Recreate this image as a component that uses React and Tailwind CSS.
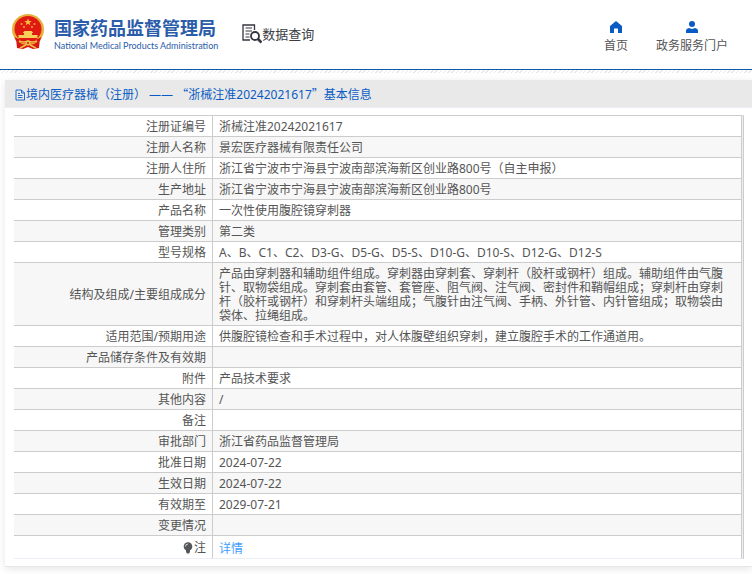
import React from 'react';

const rows = [
  { label: '注册证编号', value: '浙械注准20242021617' },
  { label: '注册人名称', value: '景宏医疗器械有限责任公司' },
  { label: '注册人住所', value: '浙江省宁波市宁海县宁波南部滨海新区创业路800号（自主申报）' },
  { label: '生产地址', value: '浙江省宁波市宁海县宁波南部滨海新区创业路800号' },
  { label: '产品名称', value: '一次性使用腹腔镜穿刺器' },
  { label: '管理类别', value: '第二类' },
  { label: '型号规格', value: 'A、B、C1、C2、D3-G、D5-G、D5-S、D10-G、D10-S、D12-G、D12-S' },
  {
    label: '结构及组成/主要组成成分',
    value:
      '产品由穿刺器和辅助组件组成。穿刺器由穿刺套、穿刺杆（胶杆或钢杆）组成。辅助组件由气腹针、取物袋组成。穿刺套由套管、套管座、阻气阀、注气阀、密封件和鞘帽组成；穿刺杆由穿刺杆（胶杆或钢杆）和穿刺杆头端组成；气腹针由注气阀、手柄、外针管、内针管组成；取物袋由袋体、拉绳组成。',
  },
  { label: '适用范围/预期用途', value: '供腹腔镜检查和手术过程中，对人体腹壁组织穿刺，建立腹腔手术的工作通道用。' },
  { label: '产品储存条件及有效期', value: '' },
  { label: '附件', value: '产品技术要求' },
  { label: '其他内容', value: '/' },
  { label: '备注', value: '' },
  { label: '审批部门', value: '浙江省药品监督管理局' },
  { label: '批准日期', value: '2024-07-22' },
  { label: '生效日期', value: '2024-07-22' },
  { label: '有效期至', value: '2029-07-21' },
  { label: '变更情况', value: '' },
];

const Emblem = () => (
  <svg viewBox="0 0 32 36" className="h-9 w-8 shrink-0" aria-hidden="true">
    <path d="M4 24 L5 34 L11 35 L16 33 L21 35 L27 34 L28 24 Z" fill="#d8150f" />
    <ellipse cx="16" cy="15.500" rx="16" ry="15.500" fill="#e6b03a" />
    <ellipse cx="16" cy="15" rx="13.500" ry="13" fill="#e01a12" />
    <path d="M16 4.500 l1 2.500 h2.700 l-2.200 1.700 .8 2.600 -2.300 -1.600 -2.300 1.600 .8 -2.600 -2.200 -1.700 h2.700 Z" fill="#f5c040" />
    <g fill="#f0a838">
      <circle cx="9.500" cy="10" r="1" />
      <circle cx="12" cy="13" r="1" />
      <circle cx="20" cy="13" r="1" />
      <circle cx="22.500" cy="10" r="1" />
    </g>
    <path d="M11 18.500 L12.500 17 H19.500 L21 18.500 V19 H20 V21 H25.500 V24 H6.500 V21 H12 V19 H11 Z" fill="#f8cf58" />
    <path d="M2.500 23 Q16 31 29.500 23 L28 27 Q16 32 4 27 Z" fill="#d8150f" />
    <path d="M7 27 Q12 29 16 27 Q20 29 25 27" fill="none" stroke="#f0bf4a" strokeWidth="1.400" />
    <circle cx="16" cy="29" r="2.600" fill="#f0bf4a" />
    <circle cx="16" cy="29" r="1" fill="#d8150f" />
    <path d="M8 34 L14 31 M24 34 L18 31" stroke="#f0bf4a" strokeWidth="1.400" />
  </svg>
);

const QueryIcon = () => (
  <svg viewBox="0 0 20 20" className="size-5 shrink-0" fill="none" stroke="#34343f" aria-hidden="true">
    <path d="M12.500 6 V1 H1 V16 H8" strokeWidth="1.300" />
    <path d="M3.500 4 H10 M3.500 7 H10 M3.500 10 H7.500 M3.500 13 H7.500" strokeWidth="1.200" />
    <circle cx="13" cy="12" r="4" strokeWidth="1.800" />
    <path d="M16 15 L19.500 18.500" strokeWidth="2.600" />
  </svg>
);

const HomeIcon = () => (
  <svg viewBox="0 0 12 12" className="size-3" fill="#0a5cc4" aria-hidden="true">
    <path d="M6 0 L12 5 V12 H8 V7.500 H4 V12 H0 V5 Z" />
  </svg>
);

const UserIcon = () => (
  <svg viewBox="0 0 12 12" className="size-3" fill="#0a5cc4" aria-hidden="true">
    <circle cx="6" cy="3" r="3" />
    <path d="M0 12 V10 Q0 7.500 3 7 L6 8 L9 7 Q12 7.500 12 10 V12 Z" />
  </svg>
);

const DocIcon = () => (
  <svg viewBox="0 0 11 12" className="h-3 w-[11px] shrink-0" fill="none" stroke="#0a5cc4" strokeWidth=".9" aria-hidden="true">
    <path d="M1 1 H6.500 L9.500 4 V11 H1 Z M6.500 1 V4 H9.500 M3 4.500 H5 M3 6.500 H7.500 M3 8.500 H7.500" />
  </svg>
);

const BulbIcon = () => (
  <svg viewBox="0 0 10 12" className="h-3 w-2.5" fill="#55565a" aria-hidden="true">
    <circle cx="5" cy="4.500" r="4.300" />
    <path d="M3 8 H7 V10 L6 11.500 H4 L3 10 Z" />
    <path d="M2.500 4.500 Q2.500 2.200 5 2" fill="none" stroke="#fff" strokeWidth=".8" />
  </svg>
);

const labelCell = 'border-r border-b border-[#cccccc] pt-1 pr-1.5 pb-0.5 text-right align-middle font-normal';
const valueCell = 'border-r border-b border-[#cccccc] pt-1 pr-3 pb-0.5 pl-1.5 align-middle';

const App = () => (
  <div className="min-h-screen overflow-x-hidden bg-white pb-2 font-['Noto_Sans','Noto_Sans_CJK_SC',sans-serif] text-xs leading-[14px] text-[#555555]">
    <header className="border-b border-[#0a5caf]">
      <div className="flex h-[69px] items-center justify-between pr-6 pl-3">
        <div className="flex items-center pb-1.5">
          <Emblem />
          <div className="ml-2.5 pt-1.5 text-[#2a5caa]">
            <h1 className="text-lg leading-5 font-bold">国家药品监督管理局</h1>
            <p className="mt-0.5 font-[Lato,sans-serif] text-[9px] leading-3">
              National Medical Products Administration
            </p>
          </div>
          <div className="ml-6 flex items-center pt-1 text-[13px] text-[#3c3c44]">
            <QueryIcon />
            <span>数据查询</span>
          </div>
        </div>
        <nav className="flex gap-7 pt-1">
          <a href="#home" className="flex flex-col items-center gap-1.5">
            <HomeIcon />
            首页
          </a>
          <a href="#portal" className="flex flex-col items-center gap-1.5">
            <UserIcon />
            政务服务门户
          </a>
        </nav>
      </div>
    </header>
    {/* hatched strip under the header */}
    <div className="h-[3px] bg-[repeating-linear-gradient(135deg,#e8e8e8_0_1px,#ffffff_1px_3px)]" />

    <main className="mt-[7px] ml-[5px] border-b border-[#e6e6e6] pb-[7px] shadow-[0_2px_8px_rgba(0,0,0,0.1)]">
      <h2 className="flex h-7 items-center border-b border-[#ebeef5] bg-[#e9e9e9] pt-0.5 pl-2.5 text-[#0a5cc4]">
        <DocIcon />
        <span>
          境内医疗器械（注册） ——{' '}
          <span className="font-['Noto_Sans_CJK_SC',sans-serif]">“</span>
          浙械注准20242021617
          <span className="font-['Noto_Sans_CJK_SC',sans-serif]">”</span>
          基本信息
        </span>
      </h2>
      <div className="mt-[7px] mr-2 ml-[9px] border-r border-[#cccccc] bg-[#ebeef5] pr-px">
        <table className="w-full table-fixed border-separate border-spacing-0 border-t border-[#cccccc] bg-white">
          <colgroup>
            <col className="w-[199px]" />
            <col />
          </colgroup>
          <tbody>
            {rows.map(({ label, value }) => (
              <tr key={label} className="h-[21px] even:bg-[#f7f7f7]">
                <th scope="row" className={labelCell}>{label}</th>
                <td className={valueCell}>{value}</td>
              </tr>
            ))}
            <tr className="h-[23px]">
              <th scope="row" className="border-r border-b border-r-[#cccccc] border-b-[#ebeef5] pt-0.5 pr-1.5 text-right font-normal">
                <span className="flex items-center justify-end gap-px">
                  <BulbIcon />注
                </span>
              </th>
              <td className="border-r border-b border-r-[#cccccc] border-b-[#ebeef5] pt-1 pl-1.5">
                <a href="#detail" className="text-[#409eff]">详情</a>
              </td>
            </tr>
          </tbody>
        </table>
      </div>
    </main>
  </div>
);

export default App;
